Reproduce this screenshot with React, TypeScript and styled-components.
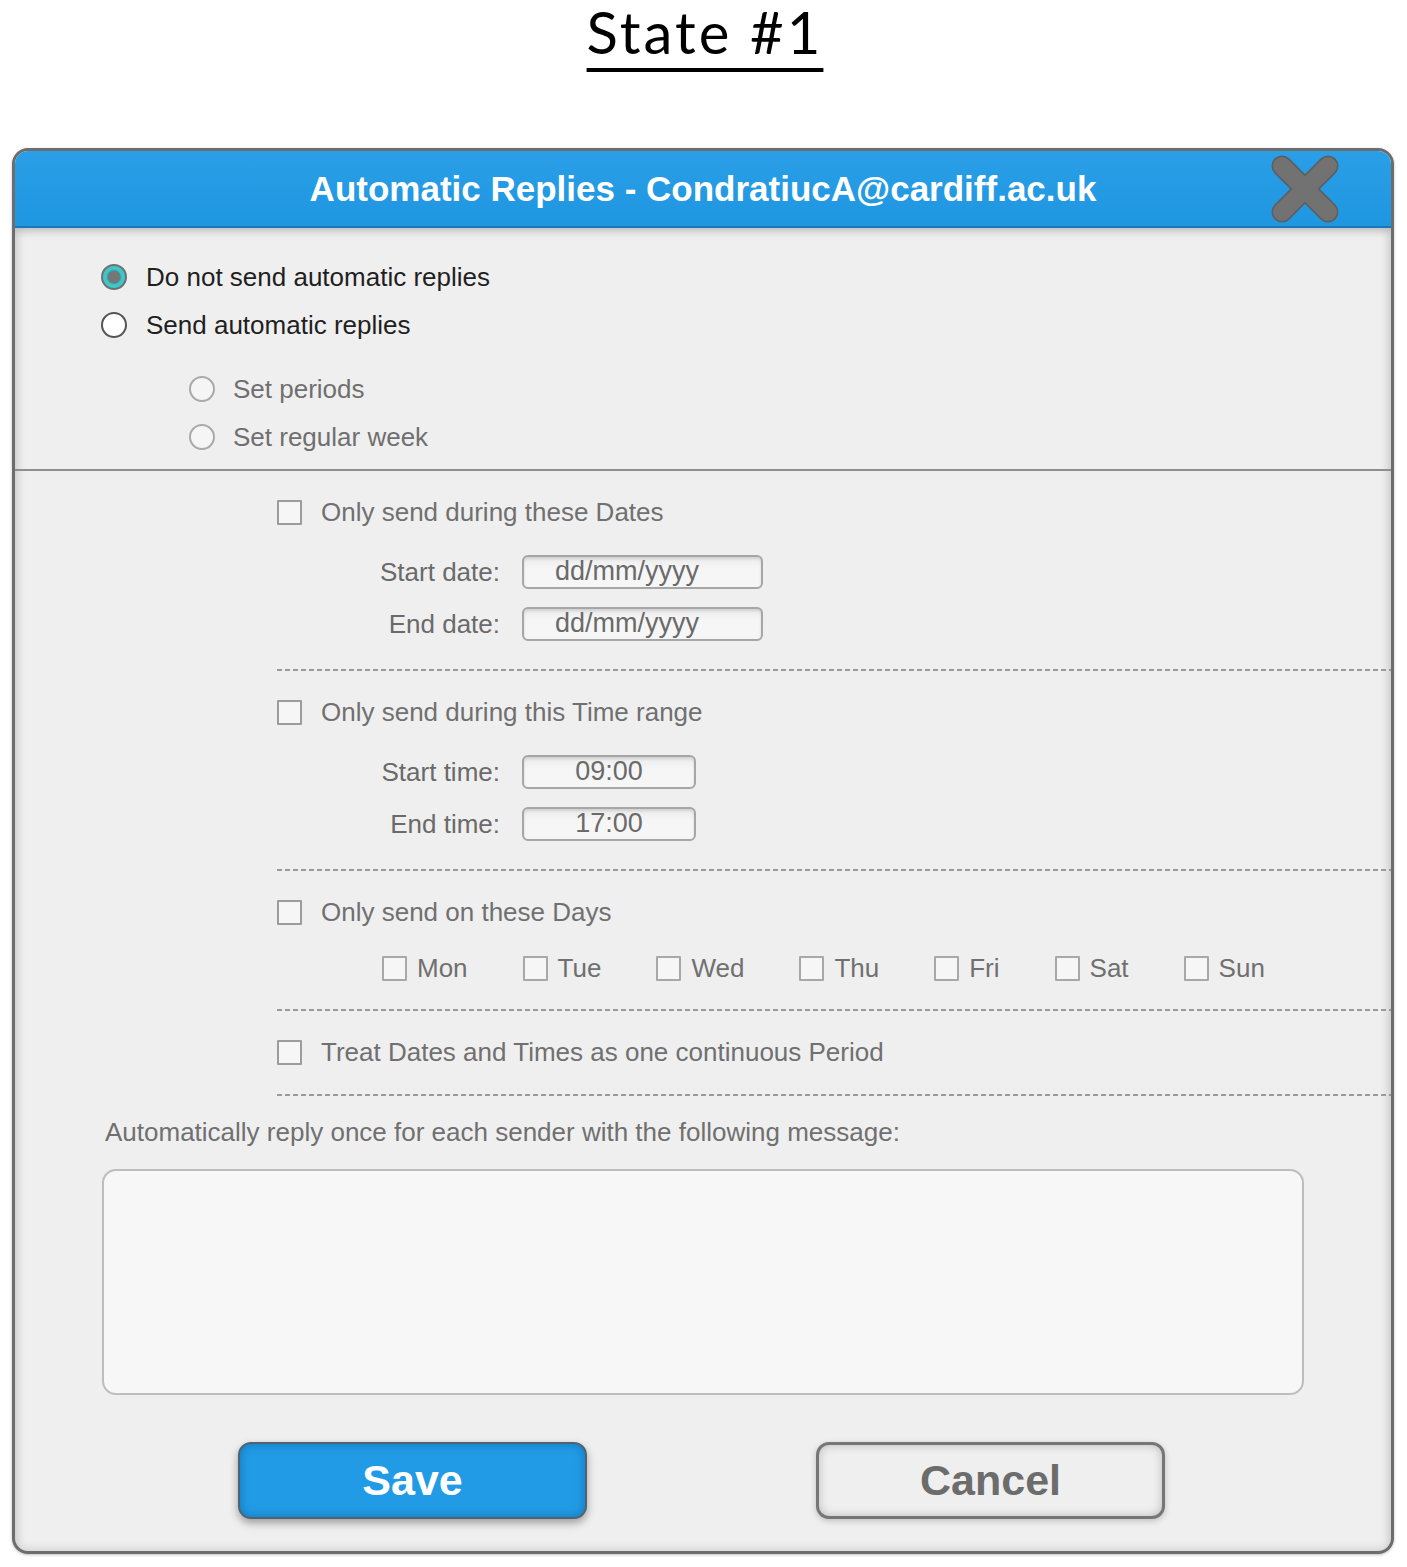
import React from "react";
import styled, { createGlobalStyle, css } from "styled-components";

const GlobalStyle = createGlobalStyle`
  html, body {
    margin: 0;
    padding: 0;
    background: #ffffff;
  }
  body {
    font-family: "Liberation Sans", Arial, Helvetica, sans-serif;
    -webkit-font-smoothing: antialiased;
  }
  * { box-sizing: border-box; }
`;

const Page = styled.div`
  width: 1407px;
  display: flex;
  flex-direction: column;
  align-items: flex-start;
  padding-bottom: 12px;
`;

const Heading = styled.h1`
  align-self: center;
  margin: 0 0 0 3px;
  height: 66px;
  font-family: Lato, "Open Sans", sans-serif;
  font-weight: 400;
  font-size: 58px;
  line-height: 64px;
  letter-spacing: 3px;
  color: #000;
  text-decoration: underline;
  text-decoration-thickness: 4px;
  text-underline-offset: 14px;
`;

const Dialog = styled.section`
  margin: 82px 0 0 12px;
  width: 1382px;
  border: 3px solid #6d6d6d;
  border-radius: 16px;
  overflow: hidden;
  background: #efefef;
  display: flex;
  flex-direction: column;
  box-shadow: 0 1px 3px rgba(0, 0, 0, 0.25);
`;

const Header = styled.header`
  position: relative;
  z-index: 1;
  height: 77px;
  background: linear-gradient(#2a9fe8, #1f96e0);
  border-bottom: 2px solid #1a78b8;
  box-shadow: 0 3px 8px rgba(0, 0, 0, 0.22);
  display: grid;
  grid-template-columns: 1fr auto 1fr;
  align-items: center;
`;

const HeaderTitle = styled.h2`
  grid-column: 2;
  margin: 0;
  font-size: 35px;
  font-weight: 700;
  color: #ffffff;
  white-space: nowrap;
`;

const CloseButton = styled.button`
  grid-column: 3;
  justify-self: end;
  margin-right: 50px;
  width: 72px;
  height: 70px;
  padding: 0;
  border: none;
  background: none;
  display: flex;
  align-items: center;
  justify-content: center;
  cursor: pointer;
`;

const Body = styled.div`
  display: flex;
  flex-direction: column;
  padding: 25px 0 32px;
  box-shadow: inset 10px 0 10px -8px rgba(0, 0, 0, 0.18),
    inset -10px 0 10px -8px rgba(0, 0, 0, 0.18),
    inset 0 -10px 10px -8px rgba(0, 0, 0, 0.12);
`;

const RadioGroup = styled.div<{ $indent: number; $top?: number }>`
  display: flex;
  flex-direction: column;
  padding-left: ${(p) => p.$indent}px;
  margin-top: ${(p) => p.$top ?? 0}px;
`;

const RadioRow = styled.label<{ $gap: number }>`
  height: 48px;
  display: flex;
  align-items: center;
  gap: ${(p) => p.$gap}px;
`;

const RadioDot = styled.span<{ $variant: "checked" | "open" | "muted" }>`
  position: relative;
  width: 26px;
  height: 26px;
  flex: none;
  border-radius: 50%;
  ${(p) =>
    p.$variant === "checked"
      ? css`
          border: 2px solid #707070;
          background: #3fc6c9;
          &::after {
            content: "";
            position: absolute;
            left: 50%;
            top: 50%;
            width: 12px;
            height: 12px;
            margin: -6px 0 0 -6px;
            border-radius: 50%;
            background: #767676;
            box-shadow: 0 0 1px 1px rgba(60, 60, 60, 0.35);
          }
        `
      : p.$variant === "open"
      ? css`
          border: 2.5px solid #555;
          background: #ffffff;
        `
      : css`
          border: 2.5px solid #a9a9a9;
          background: #f5f5f5;
        `}
`;

const RadioLabel = styled.span<{ $muted?: boolean }>`
  font-size: 26px;
  color: ${(p) => (p.$muted ? "#6f6f6f" : "#1f1f1f")};
  white-space: nowrap;
`;

const Rule = styled.hr`
  margin: 8px 0 0;
  border: none;
  height: 2px;
  background: #8e8e8e;
`;

const Section = styled.div<{ $bottom: number }>`
  margin-left: 262px;
  padding-top: 17px;
  display: flex;
  flex-direction: column;
  & > :last-child {
    margin-top: ${(p) => p.$bottom}px;
  }
`;

const DashedRule = styled.div`
  height: 2px;
  background: repeating-linear-gradient(
    to right,
    #9a9a9a 0 5px,
    transparent 5px 8px
  );
`;

const CheckRow = styled.label`
  height: 48px;
  display: flex;
  align-items: center;
  gap: 19px;
`;

const CheckBox = styled.span<{ $light?: boolean }>`
  width: 25px;
  height: 25px;
  flex: none;
  border: 2.5px solid ${(p) => (p.$light ? "#a8a8a8" : "#9c9c9c")};
  background: #f6f6f6;
  border-radius: 1px;
`;

const CheckLabel = styled.span`
  font-size: 26px;
  color: #707070;
  white-space: nowrap;
`;

const FieldGrid = styled.div`
  margin-top: 10px;
  display: grid;
  grid-template-columns: 223px auto;
  grid-auto-rows: 52px;
  column-gap: 22px;
  align-items: center;
  justify-content: start;
`;

const FieldLabel = styled.span`
  text-align: right;
  font-size: 26px;
  color: #6a6a6a;
  white-space: nowrap;
`;

const FieldInput = styled.div<{ $width: number; $align: "left" | "center" }>`
  width: ${(p) => p.$width}px;
  height: 34px;
  border: 2px solid #a6a6a6;
  border-radius: 6px;
  background: linear-gradient(#ececec, #f6f6f6 40%);
  box-shadow: inset 0 2px 3px rgba(0, 0, 0, 0.12);
  font-size: 27px;
  line-height: 29px;
  color: #6a6a6a;
  text-align: ${(p) => p.$align};
  padding-left: ${(p) => (p.$align === "left" ? "31px" : "0")};
  white-space: nowrap;
  overflow: hidden;
`;

const DaysRow = styled.div`
  margin-top: 8px;
  height: 48px;
  padding-left: 105px;
  display: flex;
  align-items: center;
  gap: 55px;
`;

const DayItem = styled.label`
  display: flex;
  align-items: center;
  gap: 10px;
`;

const MessageLabel = styled.p`
  margin: 21px 0 0 90px;
  height: 30px;
  font-size: 26px;
  line-height: 30px;
  color: #707070;
  white-space: nowrap;
`;

const MessageBox = styled.div`
  margin: 22px 0 0 87px;
  width: 1202px;
  height: 226px;
  border: 2px solid #bdbdbd;
  border-radius: 14px;
  background: #f7f7f7;
`;

const ButtonRow = styled.div`
  margin: 47px 0 0 223px;
  display: flex;
  gap: 229px;
`;

const Button = styled.button<{ $primary?: boolean }>`
  width: 349px;
  height: 77px;
  border-radius: 13px;
  font-family: "Liberation Sans", Arial, sans-serif;
  font-size: 43px;
  font-weight: 700;
  cursor: pointer;
  ${(p) =>
    p.$primary
      ? css`
          border: 2.5px solid #4f6373;
          background: #219be6;
          color: #ffffff;
          box-shadow: inset 0 0 10px rgba(0, 40, 90, 0.35),
            0 4px 8px rgba(0, 0, 0, 0.35);
        `
      : css`
          border: 3px solid #767676;
          background: #efefef;
          color: #6c6c6c;
          box-shadow: inset 0 0 10px rgba(0, 0, 0, 0.22),
            0 2px 6px rgba(0, 0, 0, 0.2);
        `}
`;

const days = ["Mon", "Tue", "Wed", "Thu", "Fri", "Sat", "Sun"];

const CloseIcon = () => (
  <svg width="72" height="70" viewBox="0 0 72 70" aria-hidden="true">
    <g stroke="#5e5e5e" strokeWidth="21" strokeLinecap="round">
      <line x1="13" y1="12" x2="59" y2="58" />
      <line x1="59" y1="12" x2="13" y2="58" />
    </g>
    <g stroke="#727272" strokeWidth="18" strokeLinecap="round">
      <line x1="13" y1="12" x2="59" y2="58" />
      <line x1="59" y1="12" x2="13" y2="58" />
    </g>
  </svg>
);

export default function App() {
  return (
    <Page>
      <GlobalStyle />
      <Heading>State #1</Heading>
      <Dialog>
        <Header>
          <HeaderTitle>Automatic Replies - CondratiucA@cardiff.ac.uk</HeaderTitle>
          <CloseButton aria-label="Close">
            <CloseIcon />
          </CloseButton>
        </Header>
        <Body>
          <RadioGroup $indent={86}>
            <RadioRow $gap={19}>
              <RadioDot $variant="checked" />
              <RadioLabel>Do not send automatic replies</RadioLabel>
            </RadioRow>
            <RadioRow $gap={19}>
              <RadioDot $variant="open" />
              <RadioLabel>Send automatic replies</RadioLabel>
            </RadioRow>
          </RadioGroup>
          <RadioGroup $indent={174} $top={16}>
            <RadioRow $gap={18}>
              <RadioDot $variant="muted" />
              <RadioLabel $muted>Set periods</RadioLabel>
            </RadioRow>
            <RadioRow $gap={18}>
              <RadioDot $variant="muted" />
              <RadioLabel $muted>Set regular week</RadioLabel>
            </RadioRow>
          </RadioGroup>
          <Rule />

          <Section $bottom={19}>
            <CheckRow>
              <CheckBox />
              <CheckLabel>Only send during these Dates</CheckLabel>
            </CheckRow>
            <FieldGrid>
              <FieldLabel>Start date:</FieldLabel>
              <FieldInput $width={241} $align="left">dd/mm/yyyy</FieldInput>
              <FieldLabel>End date:</FieldLabel>
              <FieldInput $width={241} $align="left">dd/mm/yyyy</FieldInput>
            </FieldGrid>
            <DashedRule />
          </Section>

          <Section $bottom={19}>
            <CheckRow>
              <CheckBox />
              <CheckLabel>Only send during this Time range</CheckLabel>
            </CheckRow>
            <FieldGrid>
              <FieldLabel>Start time:</FieldLabel>
              <FieldInput $width={174} $align="center">09:00</FieldInput>
              <FieldLabel>End time:</FieldLabel>
              <FieldInput $width={174} $align="center">17:00</FieldInput>
            </FieldGrid>
            <DashedRule />
          </Section>

          <Section $bottom={17}>
            <CheckRow>
              <CheckBox />
              <CheckLabel>Only send on these Days</CheckLabel>
            </CheckRow>
            <DaysRow>
              {days.map((d) => (
                <DayItem key={d}>
                  <CheckBox $light />
                  <CheckLabel>{d}</CheckLabel>
                </DayItem>
              ))}
            </DaysRow>
            <DashedRule />
          </Section>

          <Section $bottom={18}>
            <CheckRow>
              <CheckBox />
              <CheckLabel>Treat Dates and Times as one continuous Period</CheckLabel>
            </CheckRow>
            <DashedRule />
          </Section>

          <MessageLabel>
            Automatically reply once for each sender with the following message:
          </MessageLabel>
          <MessageBox />

          <ButtonRow>
            <Button $primary>Save</Button>
            <Button>Cancel</Button>
          </ButtonRow>
        </Body>
      </Dialog>
    </Page>
  );
}
